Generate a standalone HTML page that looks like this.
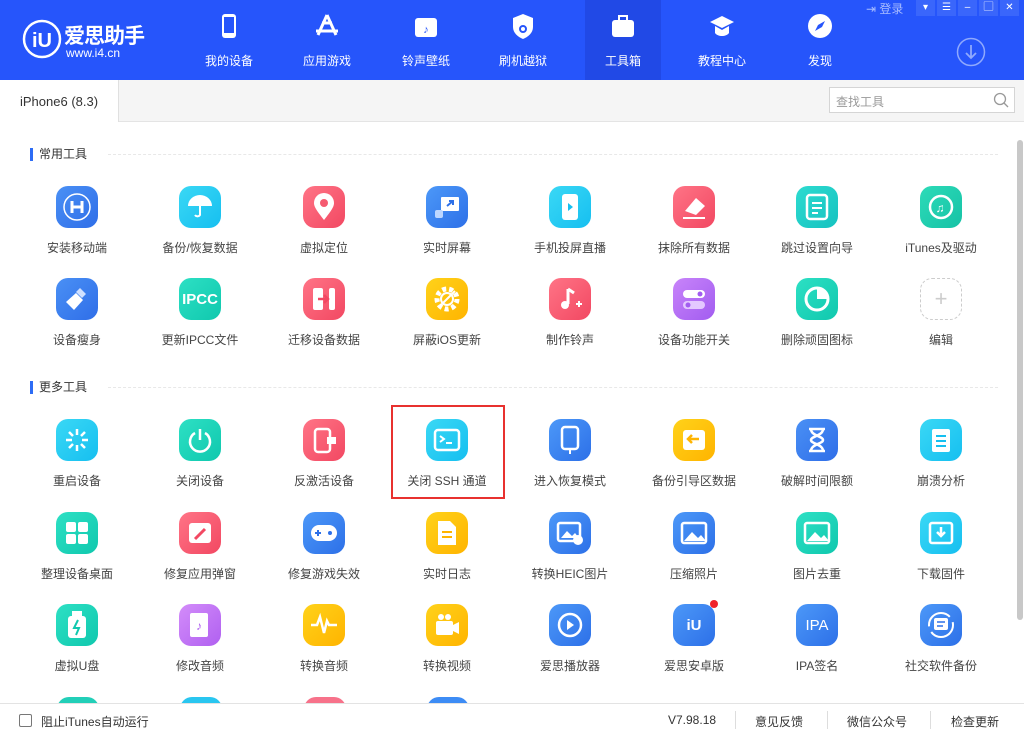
<!DOCTYPE html>
<html><head><meta charset="utf-8"><style>
*{margin:0;padding:0;box-sizing:border-box}
body{width:1024px;height:736px;overflow:hidden;background:#fff;font-family:"Liberation Sans","Noto Sans CJK SC",sans-serif;position:relative}
.hdr{position:absolute;left:0;top:0;width:1024px;height:80px;background:#2655fb}
.nav{position:absolute;top:0;width:76px;height:80px;text-align:center;color:#fff;font-size:12px}
.nav span{position:absolute;left:0;right:0;top:52px}
.nav svg{position:absolute;left:26px;top:13px}
.act{background:#2149e6}
.tb{position:absolute;top:0;width:19px;height:16px;background:#3a66fb;color:#fff;font-size:10px;text-align:center;line-height:16px}
.tabbar{position:absolute;top:80px;left:0;width:1024px;height:42px;background:#f5f5f5;border-bottom:1px solid #e4e4e4}
.tab{position:absolute;left:0;top:0;width:119px;height:42px;background:#fff;border-right:1px solid #e0e0e0;font-size:13px;color:#333;padding:14px 0 0 20px}
.srch{position:absolute;left:829px;top:7px;width:186px;height:26px;border:1px solid #d5d5d5;background:#fff;font-size:12px;color:#999;padding:5px 0 0 6px}
.sec{position:absolute;left:30px;font-size:12px;color:#333;border-left:3px solid #2d6cf5;padding-left:6px;line-height:13px}
.dash{position:absolute;left:108px;width:890px;border-top:1px dashed #e8e8e8}
.it{position:absolute;width:120px;text-align:center;font-size:12px;color:#444}
.ic{width:42px;height:42px;border-radius:12px;margin:0 auto 11px;position:relative;display:flex;align-items:center;justify-content:center;color:#fff;font-weight:bold;font-size:15px}
.foot{position:absolute;left:0;top:703px;width:1024px;height:33px;border-top:1px solid #e3e3e3;background:#fff;font-size:12px;color:#333}
.scroll{position:absolute;left:1017px;top:140px;width:6px;height:480px;background:#c8c8c8;border-radius:3px}
.w{background:#fff;border-radius:3px}
</style></head><body>
<div class="hdr">
 <svg style="position:absolute;left:22px;top:19px" width="40" height="40"><circle cx="20" cy="20" r="18" fill="none" stroke="#fff" stroke-width="2.5"/><text x="20" y="28" fill="#fff" font-size="20" font-weight="bold" text-anchor="middle" font-family="Liberation Sans">iU</text></svg>
 <div style="position:absolute;left:64px;top:20px;color:#fff;font-size:21px;font-weight:bold;letter-spacing:-1px">爱思助手</div>
 <div style="position:absolute;left:66px;top:46px;color:#fff;font-size:12px">www.i4.cn</div>
 <div class="nav" style="left:191px"><svg width="24" height="28"><rect x="5" y="1" width="14" height="24" rx="3" fill="#fff"/><rect x="7" y="4" width="10" height="16" fill="#2655fb"/></svg><span>我的设备</span></div>
 <div class="nav" style="left:289px"><svg width="24" height="28"><path d="M12 2L3 22M12 2L21 22M1 18H23M7 10h10" stroke="#fff" stroke-width="3" fill="none"/></svg><span>应用游戏</span></div>
 <div class="nav" style="left:388px"><svg width="24" height="28"><rect x="1" y="5" width="22" height="19" rx="3" fill="#fff"/><text x="12" y="20" font-size="11" text-anchor="middle" fill="#2655fb">♪</text></svg><span>铃声壁纸</span></div>
 <div class="nav" style="left:485px"><svg width="24" height="28"><path d="M12 1L22 5V14C22 20 17 24 12 26C7 24 2 20 2 14V5Z" fill="#fff"/><circle cx="12" cy="16" r="3" stroke="#2655fb" stroke-width="2" fill="none"/></svg><span>刷机越狱</span></div>
 <div class="nav act" style="left:585px"><svg width="24" height="28"><rect x="1" y="7" width="22" height="17" rx="3" fill="#fff"/><rect x="8" y="3" width="8" height="5" fill="none" stroke="#fff" stroke-width="2"/></svg><span>工具箱</span></div>
 <div class="nav" style="left:684px"><svg width="24" height="28"><path d="M12 3L24 9L12 15L0 9Z" fill="#fff"/><path d="M5 13V20C8 24 16 24 19 20V13L12 17Z" fill="#fff"/></svg><span>教程中心</span></div>
 <div class="nav" style="left:782px"><svg width="24" height="28"><circle cx="12" cy="13" r="12" fill="#fff"/><path d="M17 8L10 12L7 18L14 14Z" fill="#2655fb"/></svg><span>发现</span></div>
 <svg style="position:absolute;left:956px;top:37px" width="30" height="30"><circle cx="15" cy="15" r="13.5" fill="none" stroke="#8fa9fd" stroke-width="1.5"/><path d="M15 8V21M10 16L15 21L20 16" stroke="#8fa9fd" stroke-width="1.8" fill="none"/></svg>
 <div style="position:absolute;left:866px;top:0;color:#a8bcff;font-size:12px">⇥ 登录</div>
 <div class="tb" style="left:916px">▾</div><div class="tb" style="left:937px">☰</div><div class="tb" style="left:958px">–</div><div class="tb" style="left:979px">▢</div><div class="tb" style="left:1000px">✕</div>
</div>
<div class="tabbar"><div class="tab">iPhone6 (8.3)</div><div class="srch">查找工具<svg style="position:absolute;right:5px;top:4px" width="16" height="16"><circle cx="7" cy="7" r="5.5" stroke="#999" fill="none" stroke-width="1.3"/><path d="M11 11L15 15" stroke="#999" stroke-width="1.3"/></svg></div></div>

<div class="sec" style="top:148px">常用工具</div><div class="dash" style="top:154px"></div>
<div class="sec" style="top:381px">更多工具</div><div class="dash" style="top:387px"></div>

<!-- row1 y186 -->
<div class="it" style="left:17px;top:186px"><div class="ic" style="background:linear-gradient(135deg,#4a90f5,#2f6ee8)"><svg width="30" height="30"><circle cx="15" cy="15" r="13" stroke="#fff" fill="none" stroke-width="1.5"/><path d="M10 9v12M20 9v12M10 15h10" stroke="#fff" stroke-width="3"/></svg></div>安装移动端</div>
<div class="it" style="left:140px;top:186px"><div class="ic" style="background:linear-gradient(135deg,#3ad8f5,#16bff0)"><svg width="28" height="28"><path d="M2 13A12 11 0 0 1 26 13Z" fill="#fff"/><path d="M14 13V22A3 3 0 0 1 9 22" stroke="#fff" stroke-width="2" fill="none"/></svg></div>备份/恢复数据</div>
<div class="it" style="left:264px;top:186px"><div class="ic" style="background:linear-gradient(135deg,#ff7486,#f24862)"><svg width="24" height="28"><path d="M12 27C5 18 2 14 2 10A10 10 0 0 1 22 10C22 14 19 18 12 27Z" fill="#fff"/><circle cx="12" cy="10" r="4" fill="#f55a70"/></svg></div>虚拟定位</div>
<div class="it" style="left:387px;top:186px"><div class="ic" style="background:linear-gradient(135deg,#4c98f8,#2d70e8)"><svg width="28" height="28"><rect x="8" y="4" width="18" height="14" rx="1" fill="#fff"/><rect x="2" y="17" width="8" height="8" rx="2" fill="#bcd6ff"/><path d="M14 13l6-5M16 8h4v4" stroke="#2d70e8" stroke-width="2" fill="none"/></svg></div>实时屏幕</div>
<div class="it" style="left:510px;top:186px"><div class="ic" style="background:linear-gradient(135deg,#3ad8f5,#16bff0)"><svg width="24" height="30"><rect x="4" y="2" width="16" height="26" rx="3" fill="#fff"/><path d="M10 11l5 4-5 4Z" fill="#16bff0"/></svg></div>手机投屏直播</div>
<div class="it" style="left:634px;top:186px"><div class="ic" style="background:linear-gradient(135deg,#ff7486,#f24862)"><svg width="28" height="28"><path d="M5 18L16 5L25 13L16 22Z" fill="#fff"/><path d="M3 25H25" stroke="#fff" stroke-width="2"/></svg></div>抹除所有数据</div>
<div class="it" style="left:757px;top:186px"><div class="ic" style="background:linear-gradient(135deg,#2ddbd0,#16c2c0)"><svg width="26" height="28"><rect x="3" y="2" width="20" height="24" rx="3" stroke="#fff" stroke-width="2.5" fill="none"/><path d="M8 10h10M8 15h10M8 20h6" stroke="#fff" stroke-width="2"/></svg></div>跳过设置向导</div>
<div class="it" style="left:881px;top:186px"><div class="ic" style="background:linear-gradient(135deg,#2ddbb8,#16c2a6)"><svg width="28" height="28"><circle cx="14" cy="14" r="11" stroke="#fff" stroke-width="2.5" fill="none"/><text x="13" y="19" font-size="12" fill="#fff" text-anchor="middle">♫</text></svg></div>iTunes及驱动</div>
<!-- row2 y278 -->
<div class="it" style="left:17px;top:278px"><div class="ic" style="background:linear-gradient(135deg,#4a90f5,#2f6ee8)"><svg width="30" height="30"><path d="M18 4l6 6-4 4-6-6Z" fill="#cfe0ff"/><path d="M4 18L14 9L21 16L12 26Z" fill="#fff"/></svg></div>设备瘦身</div>
<div class="it" style="left:140px;top:278px"><div class="ic" style="background:linear-gradient(135deg,#2de0c4,#10c8ae)">IPCC</div>更新IPCC文件</div>
<div class="it" style="left:264px;top:278px"><div class="ic" style="background:linear-gradient(135deg,#ff7486,#f24862)"><svg width="28" height="28"><rect x="3" y="3" width="10" height="22" rx="2" fill="#fff"/><rect x="19" y="3" width="6" height="22" rx="2" fill="#fff"/><path d="M8 14h9M14 10l4 4-4 4" stroke="#f24862" stroke-width="2.5" fill="none"/></svg></div>迁移设备数据</div>
<div class="it" style="left:387px;top:278px"><div class="ic" style="background:linear-gradient(135deg,#ffd21a,#ffb400)"><svg width="30" height="30"><circle cx="15" cy="15" r="10" stroke="#fff" stroke-width="5" stroke-dasharray="4 3" fill="none"/><circle cx="15" cy="15" r="6" stroke="#fff" stroke-width="2" fill="none"/><path d="M7 23L23 7" stroke="#fff" stroke-width="2"/></svg></div>屏蔽iOS更新</div>
<div class="it" style="left:510px;top:278px"><div class="ic" style="background:linear-gradient(135deg,#ff7486,#f24862)"><svg width="28" height="28"><path d="M12 4V19" stroke="#fff" stroke-width="3"/><circle cx="9" cy="20" r="4" fill="#fff"/><path d="M12 4L18 8" stroke="#fff" stroke-width="3"/><path d="M20 19h6M23 16v6" stroke="#fff" stroke-width="2"/></svg></div>制作铃声</div>
<div class="it" style="left:634px;top:278px"><div class="ic" style="background:linear-gradient(135deg,#c884fa,#a25cf0)"><svg width="28" height="28"><rect x="3" y="5" width="22" height="8" rx="4" fill="#fff"/><rect x="3" y="16" width="22" height="8" rx="4" fill="#e4c8ff"/><circle cx="20" cy="9" r="2.5" fill="#a25cf0"/><circle cx="8" cy="20" r="2.5" fill="#a25cf0"/></svg></div>设备功能开关</div>
<div class="it" style="left:757px;top:278px"><div class="ic" style="background:linear-gradient(135deg,#2de0c4,#10c8ae)"><svg width="28" height="28"><circle cx="14" cy="14" r="11" stroke="#fff" stroke-width="3" fill="none"/><path d="M14 14V3A11 11 0 0 1 25 14Z" fill="#fff"/></svg></div>删除顽固图标</div>
<div class="it" style="left:881px;top:278px"><div class="ic" style="border:1px dashed #ccc;color:#ccc;font-weight:normal;font-size:22px">+</div>编辑</div>
<!-- row3 y419 -->
<div class="it" style="left:17px;top:419px"><div class="ic" style="background:linear-gradient(135deg,#3ad8f5,#16bff0)"><svg width="28" height="28"><g stroke="#fff" stroke-width="2.5"><path d="M14 3v6M14 19v6M3 14h6M19 14h6M6 6l4 4M18 18l4 4M22 6l-4 4M6 22l4-4"/></g></svg></div>重启设备</div>
<div class="it" style="left:140px;top:419px"><div class="ic" style="background:linear-gradient(135deg,#2de0c4,#10c8ae)"><svg width="28" height="28"><path d="M9 7A10 10 0 1 0 19 7" stroke="#fff" stroke-width="2.5" fill="none"/><path d="M14 3v11" stroke="#fff" stroke-width="2.5"/></svg></div>关闭设备</div>
<div class="it" style="left:264px;top:419px"><div class="ic" style="background:linear-gradient(135deg,#ff7486,#f24862)"><svg width="28" height="28"><rect x="5" y="3" width="15" height="23" rx="3" stroke="#fff" stroke-width="2.5" fill="none"/><rect x="17" y="11" width="9" height="7" fill="#fff"/></svg></div>反激活设备</div>
<div class="it" style="left:387px;top:419px"><div class="ic" style="background:linear-gradient(135deg,#3ad8f5,#16bff0)"><svg width="28" height="24"><rect x="2" y="2" width="24" height="20" rx="3" stroke="#fff" stroke-width="2.5" fill="none"/><path d="M7 8l4 3-4 3M13 15h6" stroke="#fff" stroke-width="2" fill="none"/></svg></div>关闭 SSH 通道</div>
<div class="it" style="left:510px;top:419px"><div class="ic" style="background:linear-gradient(135deg,#4c98f8,#2d70e8)"><svg width="24" height="30"><rect x="4" y="2" width="16" height="22" rx="3" stroke="#fff" stroke-width="2.5" fill="none"/><path d="M12 24v5" stroke="#fff" stroke-width="2"/></svg></div>进入恢复模式</div>
<div class="it" style="left:634px;top:419px"><div class="ic" style="background:linear-gradient(135deg,#ffd21a,#ffb400)"><svg width="28" height="28"><rect x="3" y="4" width="22" height="20" rx="3" fill="#fff"/><path d="M9 13h10M12 9l-4 4 4 4" stroke="#ffb400" stroke-width="2.5" fill="none"/></svg></div>备份引导区数据</div>
<div class="it" style="left:757px;top:419px"><div class="ic" style="background:linear-gradient(135deg,#4a90f5,#2f6ee8)"><svg width="24" height="28"><path d="M4 3h16M4 25h16M6 3C6 10 18 10 18 14C18 18 6 18 6 25M18 3C18 10 6 10 6 14C6 18 18 18 18 25" stroke="#fff" stroke-width="2.5" fill="none"/></svg></div>破解时间限额</div>
<div class="it" style="left:881px;top:419px"><div class="ic" style="background:linear-gradient(135deg,#3ad8f5,#16bff0)"><svg width="24" height="28"><rect x="3" y="3" width="18" height="23" rx="2" fill="#fff"/><path d="M7 10h10M7 15h10M7 20h10" stroke="#16bff0" stroke-width="2"/></svg></div>崩溃分析</div>
<div style="position:absolute;left:391px;top:405px;width:114px;height:94px;border:2px solid #e8312f"></div>
<!-- row4 y512 -->
<div class="it" style="left:17px;top:512px"><div class="ic" style="background:linear-gradient(135deg,#2de0c4,#10c8ae)"><svg width="26" height="26"><rect x="2" y="2" width="10" height="10" rx="2" fill="#fff"/><rect x="14" y="2" width="10" height="10" rx="2" fill="#fff"/><rect x="2" y="14" width="10" height="10" rx="2" fill="#fff"/><rect x="14" y="14" width="10" height="10" rx="2" fill="#fff"/></svg></div>整理设备桌面</div>
<div class="it" style="left:140px;top:512px"><div class="ic" style="background:linear-gradient(135deg,#ff7486,#f24862)"><svg width="28" height="28"><rect x="3" y="4" width="22" height="20" rx="3" fill="#fff"/><path d="M9 20l10-10" stroke="#f24862" stroke-width="3"/></svg></div>修复应用弹窗</div>
<div class="it" style="left:264px;top:512px"><div class="ic" style="background:linear-gradient(135deg,#4c98f8,#2d70e8)"><svg width="30" height="24"><rect x="2" y="4" width="26" height="16" rx="8" fill="#fff"/><path d="M9 9v6M6 12h6" stroke="#2d70e8" stroke-width="2"/><circle cx="21" cy="12" r="2" fill="#2d70e8"/></svg></div>修复游戏失效</div>
<div class="it" style="left:387px;top:512px"><div class="ic" style="background:linear-gradient(135deg,#ffd21a,#ffb400)"><svg width="24" height="28"><path d="M3 2h12l6 6v18H3Z" fill="#fff"/><path d="M7 13h10M7 18h10" stroke="#ffb400" stroke-width="2"/></svg></div>实时日志</div>
<div class="it" style="left:510px;top:512px"><div class="ic" style="background:linear-gradient(135deg,#4c98f8,#2d70e8)"><svg width="28" height="26"><rect x="2" y="3" width="22" height="18" rx="2" stroke="#fff" stroke-width="2.5" fill="none"/><path d="M5 18l6-7 5 5 3-3 4 5" fill="#fff"/><circle cx="22" cy="20" r="5" fill="#fff"/></svg></div>转换HEIC图片</div>
<div class="it" style="left:634px;top:512px"><div class="ic" style="background:linear-gradient(135deg,#4c98f8,#2d70e8)"><svg width="28" height="26"><rect x="2" y="3" width="24" height="20" rx="2" stroke="#fff" stroke-width="2.5" fill="none"/><path d="M4 21l8-9 6 6 3-3 5 6Z" fill="#fff"/></svg></div>压缩照片</div>
<div class="it" style="left:757px;top:512px"><div class="ic" style="background:linear-gradient(135deg,#2de0c4,#10c8ae)"><svg width="28" height="26"><rect x="2" y="3" width="24" height="20" rx="2" stroke="#fff" stroke-width="2.5" fill="none"/><path d="M4 21l8-9 6 6 3-3 5 6Z" fill="#fff"/></svg></div>图片去重</div>
<div class="it" style="left:881px;top:512px"><div class="ic" style="background:linear-gradient(135deg,#3ad8f5,#16bff0)"><svg width="28" height="26"><rect x="3" y="3" width="22" height="20" rx="2" stroke="#fff" stroke-width="2.5" fill="none"/><path d="M14 7v9M10 12l4 4 4-4" stroke="#fff" stroke-width="2.5" fill="none"/></svg></div>下载固件</div>
<!-- row5 y604 -->
<div class="it" style="left:17px;top:604px"><div class="ic" style="background:linear-gradient(135deg,#2de0c4,#10c8ae)"><svg width="22" height="30"><rect x="2" y="6" width="18" height="22" rx="3" fill="#fff"/><rect x="6" y="1" width="10" height="6" fill="#fff"/><path d="M12 10l-4 8h5l-3 7" stroke="#10c8ae" stroke-width="2" fill="none"/></svg></div>虚拟U盘</div>
<div class="it" style="left:140px;top:604px"><div class="ic" style="background:linear-gradient(135deg,#d38cfa,#b060f0)"><svg width="26" height="28"><rect x="3" y="2" width="18" height="24" rx="2" fill="#fff"/><text x="12" y="19" font-size="12" text-anchor="middle" fill="#b060f0">♪</text></svg></div>修改音频</div>
<div class="it" style="left:264px;top:604px"><div class="ic" style="background:linear-gradient(135deg,#ffd21a,#ffb400)"><svg width="30" height="26"><path d="M2 13h6l3-8 4 16 3-12 2 4h8" stroke="#fff" stroke-width="2.5" fill="none"/></svg></div>转换音频</div>
<div class="it" style="left:387px;top:604px"><div class="ic" style="background:linear-gradient(135deg,#ffd21a,#ffb400)"><svg width="28" height="26"><rect x="3" y="9" width="17" height="14" rx="2" fill="#fff"/><path d="M20 13l6-3v12l-6-3Z" fill="#fff"/><circle cx="8" cy="5" r="3" fill="#fff"/><circle cx="15" cy="5" r="3" fill="#fff"/></svg></div>转换视频</div>
<div class="it" style="left:510px;top:604px"><div class="ic" style="background:linear-gradient(135deg,#4c98f8,#2d70e8)"><svg width="28" height="28"><circle cx="14" cy="14" r="11" stroke="#fff" stroke-width="2.5" fill="none"/><path d="M11 9l7 5-7 5Z" fill="#fff"/></svg></div>爱思播放器</div>
<div class="it" style="left:634px;top:604px"><div class="ic" style="background:linear-gradient(135deg,#4c98f8,#2d70e8)">iU<div style="position:absolute;right:-3px;top:-4px;width:8px;height:8px;border-radius:50%;background:#f0222a"></div></div>爱思安卓版</div>
<div class="it" style="left:757px;top:604px"><div class="ic" style="background:linear-gradient(135deg,#4c98f8,#2d70e8);font-weight:normal">IPA</div>IPA签名</div>
<div class="it" style="left:881px;top:604px"><div class="ic" style="background:linear-gradient(135deg,#4c98f8,#2d70e8)"><svg width="30" height="30"><circle cx="15" cy="15" r="12" stroke="#fff" stroke-width="2" fill="none" stroke-dasharray="30 6"/><rect x="8" y="8" width="14" height="12" rx="2" fill="#fff"/><path d="M11 12h8M11 16h6" stroke="#2d70e8" stroke-width="1.5"/></svg></div>社交软件备份</div>
<!-- row6 partial -->
<div style="position:absolute;left:57px;top:697px;width:42px;height:20px;border-radius:12px 12px 0 0;background:#22cfb8"></div>
<div style="position:absolute;left:180px;top:697px;width:42px;height:20px;border-radius:12px 12px 0 0;background:#29c6f0"></div>
<div style="position:absolute;left:304px;top:697px;width:42px;height:20px;border-radius:12px 12px 0 0;background:#f7728a"></div>
<div style="position:absolute;left:427px;top:697px;width:42px;height:20px;border-radius:12px 12px 0 0;background:#3d8cf5"></div>
<div class="scroll"></div>
<div class="foot">
 <div style="position:absolute;left:19px;top:10px;width:13px;height:13px;border:1px solid #777;border-radius:2px"></div>
 <div style="position:absolute;left:41px;top:9px">阻止iTunes自动运行</div>
 <div style="position:absolute;left:668px;top:9px">V7.98.18</div>
 <div style="position:absolute;left:735px;top:7px;height:18px;border-left:1px solid #ddd"></div>
 <div style="position:absolute;left:755px;top:9px">意见反馈</div>
 <div style="position:absolute;left:827px;top:7px;height:18px;border-left:1px solid #ddd"></div>
 <div style="position:absolute;left:847px;top:9px">微信公众号</div>
 <div style="position:absolute;left:930px;top:7px;height:18px;border-left:1px solid #ddd"></div>
 <div style="position:absolute;left:951px;top:9px">检查更新</div>
</div>
</body></html>
